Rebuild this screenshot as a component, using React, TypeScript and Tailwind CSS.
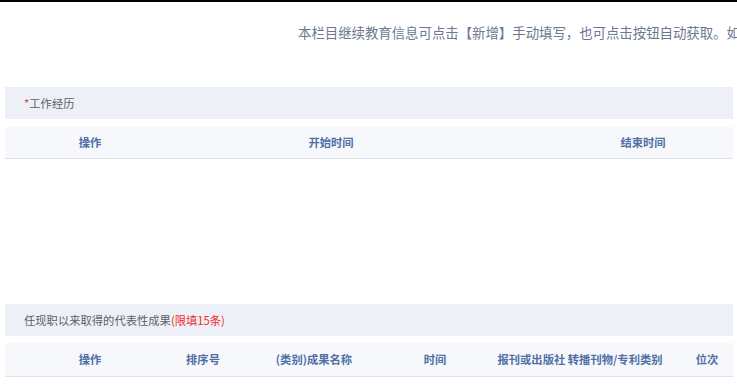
const font = { fontFamily: '"Noto Sans CJK SC", "Noto Sans", sans-serif' };

const workCols = [
  { label: "操作", w: "w-[170px]" },
  { label: "开始时间", w: "w-[312px]" },
  { label: "结束时间", w: "w-[312px]" },
];

const resultCols = [
  { label: "操作", w: "w-[170px]" },
  { label: "排序号", w: "w-[56px]" },
  { label: "(类别)成果名称", w: "w-[166px]" },
  { label: "时间", w: "w-[76px]" },
  { label: "报刊或出版社 转播刊物/专利类别", w: "w-[214px]" },
  { label: "位次", w: "w-[40px]" },
];

function SectionTitle({ children }: { children: React.ReactNode }) {
  return (
    <div className="flex h-[32px] items-center bg-[#eef0f8] pl-[19px] text-[11.3px] text-[#5b606b]">
      {children}
    </div>
  );
}

function HeadRow({ cols }: { cols: { label: string; w: string }[] }) {
  return (
    <div className="flex overflow-hidden border-b border-[#dde1e8] bg-[#f7f8fc]">
      {cols.map((c) => (
        <div
          key={c.label}
          className={`${c.w} flex shrink-0 items-center justify-center whitespace-nowrap text-[11.3px] font-bold text-[#4f6fa6]`}
        >
          {c.label}
        </div>
      ))}
    </div>
  );
}

export default function App() {
  return (
    <div className="h-[387px] w-[737px] overflow-hidden bg-white" style={font}>
      <div className="h-[2px] bg-black" />

      {/* notice line runs past the right edge in the original */}
      <div className="mt-[20px] h-[20px] overflow-hidden whitespace-nowrap pl-[298px] text-[13.4px] leading-[20px] text-[#6b7890]">
        本栏目继续教育信息可点击【新增】手动填写，也可点击按钮自动获取。如
      </div>

      <div className="ml-[5px] mr-[4px] mt-[45px]">
        <SectionTitle>
          <span className="text-[#e53935]">*</span>工作经历
        </SectionTitle>
        <div className="mt-[8px] [&>div]:h-[32px]">
          <HeadRow cols={workCols} />
        </div>

        <div className="h-[145px]" />

        <SectionTitle>
          任现职以来取得的代表性成果
          <span className="text-[#f02c2c]">(限填15条)</span>
        </SectionTitle>
        <div className="mt-[7px] [&>div]:h-[34px]">
          <HeadRow cols={resultCols} />
        </div>
      </div>
    </div>
  );
}
